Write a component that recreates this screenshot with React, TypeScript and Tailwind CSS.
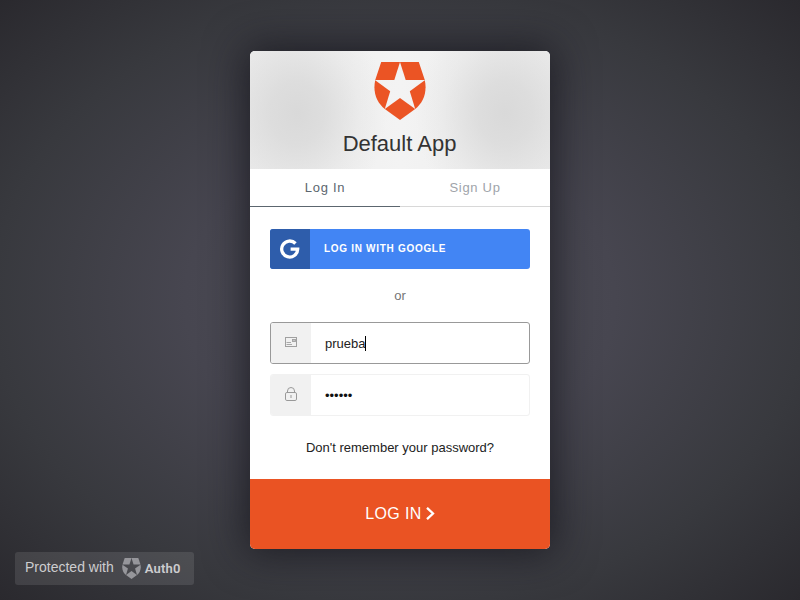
import React from "react";

function Shield({ className }: { className: string }) {
  return (
    <svg viewBox="0 0 52 58" className={className} fill="currentColor">
      <path d="M7.2 0H26L20.3 18H1.2Z" />
      <path d="M26 0H44.8L50.8 18H31.7Z" />
      <path d="M1.2 18.3L16.2 29.3L10.8 47C2.5 40.5 -1.3 30 1.2 18.3Z" />
      <path d="M50.8 18.3L35.8 29.3L41.2 47C49.5 40.5 53.3 30 50.8 18.3Z" />
      <path d="M26 36L41.2 47L26 58L10.8 47Z" />
    </svg>
  );
}

function GoogleMark() {
  return (
    <svg viewBox="0 0 20 20" className="h-5 w-5" fill="none" stroke="#fff" strokeWidth="3.3">
      <path d="M15.5 4.5A8 8 0 1 0 17.7 10.2H10.6" />
    </svg>
  );
}

function CardIcon() {
  return (
    <svg viewBox="0 0 12 10" className="h-[10px] w-3" fill="none" stroke="#a0a0a0">
      <rect x=".5" y=".5" width="11" height="9" />
      <path d="M1.5 5.5H6M1.5 7.5H7" strokeWidth=".9" />
      <rect x="7.5" y="2.5" width="3" height="2" fill="#c4c4c4" strokeWidth=".9" />
    </svg>
  );
}

function LockIcon() {
  return (
    <svg viewBox="0 0 12 14" className="h-[14px] w-3" fill="none" stroke="#999">
      <rect x=".5" y="5.5" width="11" height="8" rx="1.4" />
      <path d="M2.5 5.5V4a3.5 3.5 0 0 1 7 0V5.5" />
      <path d="M6 8V11" />
    </svg>
  );
}

export default function App() {
  return (
    <div className="relative flex h-[600px] w-[800px] items-start justify-center overflow-hidden bg-[radial-gradient(#505059_0%,#474650_38%,#38393e_72%,#2a292e_100%)] pt-[51px] font-['Liberation_Sans',Arial,sans-serif]">
      <main className="flex h-[498px] w-[300px] flex-col overflow-hidden rounded-[5px] bg-white shadow-[0_0_40px_4px_rgba(17,17,24,0.75)]">
        <header className="flex h-[118px] shrink-0 flex-col items-center bg-[radial-gradient(ellipse_90px_105px_at_47px_62px,#d9d9d9_0%,rgba(217,217,217,0.8)_30%,rgba(217,217,217,0.25)_70%,rgba(217,217,217,0)_100%),radial-gradient(ellipse_90px_105px_at_255px_62px,#d9d9d9_0%,rgba(217,217,217,0.8)_30%,rgba(217,217,217,0.25)_70%,rgba(217,217,217,0)_100%),linear-gradient(90deg,#ececec,#f3f3f3_50%,#ececec)] pt-[11px]">
          <Shield className="h-[58px] w-[52px] text-[#eb5424]" />
          <h1 className="mt-[11px] mr-px text-[22px] leading-[25px] text-[#333]">Default App</h1>
        </header>
        <nav className="flex h-[38px] shrink-0 text-[13px] leading-[37px] tracking-[0.7px]">
          <button className="flex-1 border-b border-[#5c666f] text-[#5c666f]">Log In</button>
          <button className="flex-1 border-b border-[#d8d8d8] text-[#a0a4aa]">Sign Up</button>
        </nav>
        <div className="flex flex-1 flex-col px-5 pt-[22px]">
          <button className="flex h-10 overflow-hidden rounded-[3px] bg-[#4285f4] text-white">
            <span className="flex h-10 w-10 items-center justify-center bg-[#2e5dab]">
              <GoogleMark />
            </span>
            <span className="pl-[14px] text-[10px] leading-[39px] font-bold tracking-[0.7px]">LOG IN WITH GOOGLE</span>
          </button>
          <p className="mt-[19px] text-center text-[13px] leading-4 text-[#757575]">or</p>
          <div className="mt-[18px] flex h-[42px] overflow-hidden rounded-[3px] border border-[#999]">
            <span className="flex w-10 items-center justify-center bg-[#f1f1f1] pb-[2px]">
              <CardIcon />
            </span>
            <span className="flex items-center pt-[2px] pl-[14px] text-[13px] leading-4 text-[#222]">
              prueba<i className="mb-px h-[15px] w-px bg-black" />
            </span>
          </div>
          <div className="mt-[10px] flex h-[42px] overflow-hidden rounded-[3px] border border-[#f1f1f1]">
            <span className="flex w-10 items-center justify-center bg-[#f1f1f1] pb-[2px]">
              <LockIcon />
            </span>
            <span className="flex items-center pt-[2px] pl-[14px] text-[13px] leading-4 text-[#111]">••••••</span>
          </div>
          <a className="mt-6 text-center text-[13px] leading-4 text-[#222]">Don't remember your password?</a>
        </div>
        <button className="flex h-[70px] shrink-0 items-center justify-center bg-[#ea5323] text-base leading-5 text-white">
          <span className="tracking-[0.4px]">LOG IN</span>
          <svg viewBox="0 0 9 13" className="mb-px ml-1 h-[13px] w-[9px]" fill="none" stroke="#fff" strokeWidth="2.3">
            <path d="M1 .8L7 6.5L1 12.2" />
          </svg>
        </button>
      </main>
      <footer className="absolute top-[552px] left-[15px] flex h-[33px] w-[179px] items-center rounded-[3px] bg-white/10 pl-[10px] text-[#cdcdcf]">
        <span className="pb-[3px] text-sm leading-4">Protected with</span>
        <Shield className="ml-2 h-[21px] w-[19px] text-[#96969b]" />
        <span className="ml-1 font-['Roboto',sans-serif] text-[13px] leading-4 font-semibold tracking-[0.2px]">Auth0</span>
      </footer>
    </div>
  );
}
